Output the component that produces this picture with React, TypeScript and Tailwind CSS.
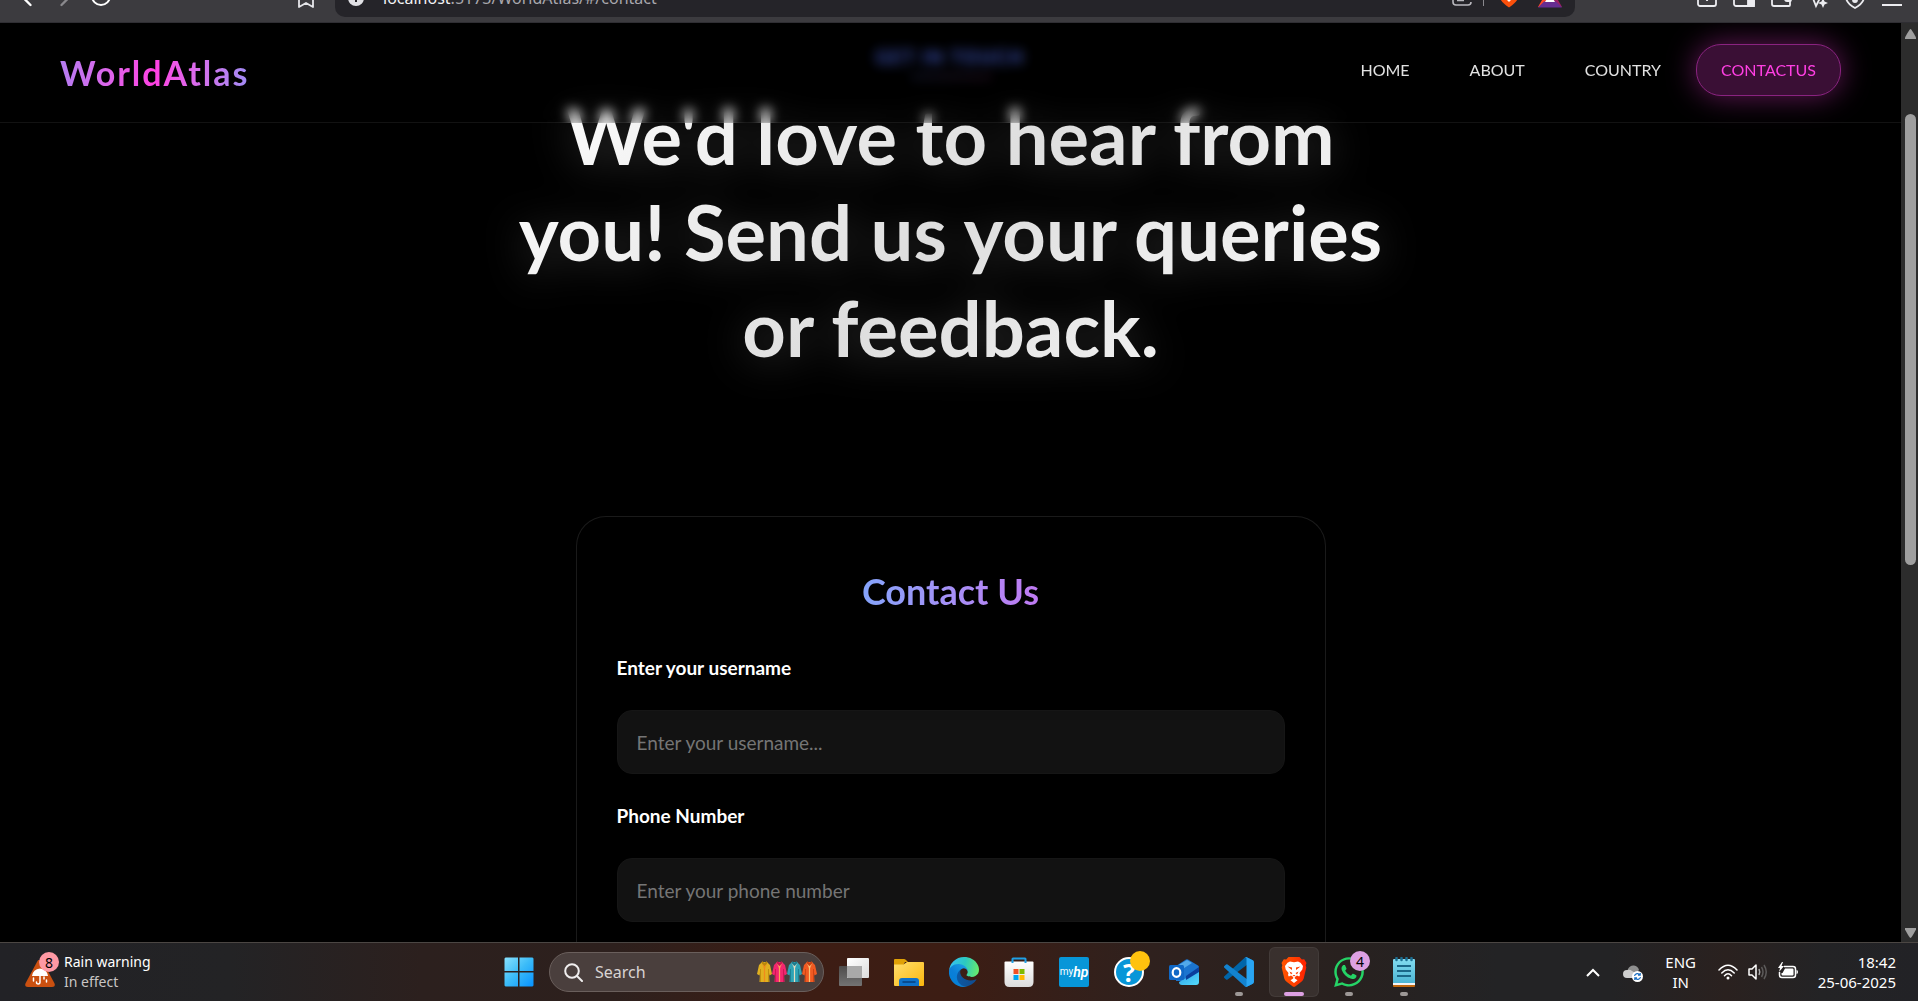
import type { ReactNode } from 'react';
import {
  ChevronLeft, ChevronRight, Bookmark, RotateCw, Download, Wallet,
} from 'lucide-react';
import { FaWhatsapp } from 'react-icons/fa';

/* ---------- Browser toolbar ---------- */

function BrowserBar() {
  return (
    <div className="flex h-[23px] shrink-0 items-end overflow-hidden border-b border-[#2f2e33] bg-[#3c3b3f] font-['Noto_Sans',sans-serif]">
      <div className="flex h-12 w-full shrink-0 items-end">
        <div className="flex w-[335px] shrink-0 items-end justify-between pr-[17px] pb-[10px] pl-[13px]">
          <div className="flex items-end gap-[10px]">
            <button aria-label="Back"><ChevronLeft className="size-7 text-white" /></button>
            <button aria-label="Forward"><ChevronRight className="size-7 text-[#8a898d]" /></button>
            <button aria-label="Reload" className="pb-1"><RotateCw className="size-6 text-white" /></button>
          </div>
          <button aria-label="Bookmark this page" className="pb-[2px]"><Bookmark className="size-6 text-[#e6e6ea]" strokeWidth={1.8} /></button>
        </div>
        <div className="mb-[5px] flex h-10 grow items-end rounded-[10px] bg-[#252429] pr-[13px] pb-[9px] pl-[13px]">
          <svg viewBox="0 0 16 16" className="mr-[19px] mb-[2px] size-4" aria-hidden="true">
            <circle cx="8" cy="8" r="8" fill="#e0e0e4" />
            <path d="M8 4v1.5M8 7v5" stroke="#252429" strokeWidth="2" />
          </svg>
          <span className="text-[16px] leading-5 text-[#a9a8ae]">
            <span className="text-[#f2f2f5]">localhost</span>:5173/WorldAtlas/#/contact
          </span>
          <div className="ml-auto flex items-end gap-[11px]">
            <svg viewBox="0 0 20 20" className="size-5" fill="none" stroke="#b9b8be" strokeWidth="1.6" aria-hidden="true">
              <path d="M1 2v12a3 3 0 0 0 3 3h12a3 3 0 0 0 3-3M5 12.500h7" />
            </svg>
            <span className="mb-[2px] h-5 w-px bg-[#8a898e]" />
            <svg viewBox="0 0 20 24" className="mx-1 h-6 w-5" aria-hidden="true">
              <path d="M1 4h18v10q-1 4-9 9.500q-8-5.500-9-9.500z" fill="#fb500b" />
              <path d="M7 10h6l1 4l-4 4l-4-4z" fill="#fff" />
            </svg>
            <svg viewBox="0 0 24 22" className="ml-1 h-[22px] w-6" aria-hidden="true">
              <path d="M12 0L0 21h12z" fill="#ff4724" />
              <path d="M12 0l12 21H12z" fill="#9e1f63" />
              <path d="M0 21.500l6-6h12l6 6z" fill="#662d91" />
              <path d="M12 8l5 8H7z" fill="#fff" />
            </svg>
          </div>
        </div>
        <div className="flex w-[343px] shrink-0 items-end justify-end gap-[13px] pr-[14px] pb-[13px] text-[#ececf0]">
          <button aria-label="Downloads"><Download className="size-6" strokeWidth={1.8} /></button>
          <button aria-label="Sidebar">
            <svg viewBox="0 0 24 24" className="size-6" fill="none" stroke="currentColor" strokeWidth="1.8">
              <rect x="2" y="5" width="20" height="16" rx="2" /><path d="M16 5h6v16h-6z" fill="currentColor" />
            </svg>
          </button>
          <button aria-label="Wallet"><Wallet className="size-6" strokeWidth={1.8} /></button>
          <button aria-label="Leo AI">
            <svg viewBox="0 0 24 24" className="size-6" fill="none" stroke="currentColor" strokeWidth="1.8">
              <path d="M4 6l6 15l4-8" /><path d="M17 13l1.500 3.500L22 18l-3.500 1.500L17 23l-1.500-3.500L12 18l3.500-1.500z" fill="currentColor" stroke="none" />
            </svg>
          </button>
          <button aria-label="VPN">
            <svg viewBox="0 0 24 24" className="size-6" fill="none" stroke="currentColor" strokeWidth="1.8">
              <path d="M3 6h18v6q0 6-9 11q-9-5-9-11z" /><circle cx="12" cy="15" r="2" fill="currentColor" />
            </svg>
          </button>
          <button aria-label="Menu">
            <svg viewBox="0 0 24 24" className="size-6" stroke="currentColor" strokeWidth="2">
              <path d="M2 12h20M2 20h20" />
            </svg>
          </button>
        </div>
      </div>
    </div>
  );
}

/* ---------- Site ---------- */

const links = ['Home', 'About', 'Country'];

function NavBar() {
  return (
    <header className="absolute inset-x-0 top-0 z-10 flex h-[100px] items-center justify-between border-b border-white/7 bg-black/10 px-[60px] backdrop-blur-[6px]">
      <a href="#/" className="bg-linear-to-r from-[#b47cf2] via-[#ff3fe3] to-[#a08bf5] bg-clip-text text-[34px] font-bold tracking-[2px] text-transparent">
        WorldAtlas
      </a>
      <nav className="mb-1.5 flex gap-[10px] text-[16px] text-[#e2e2e2] uppercase">
        {links.map((l) => (
          <a key={l} href={`#/${l.toLowerCase()}`} className="rounded-[25px] border border-transparent px-6 py-[13px]">{l}</a>
        ))}
        <a href="#/contact" aria-current="page" className="rounded-[25px] border border-[#8a2380] bg-[#3a0f35] px-6 py-[13px] text-[#ff3fe3] shadow-[0_0_30px_rgba(255,63,227,0.4)]">
          ContactUs
        </a>
      </nav>
    </header>
  );
}

function Field({ id, label, placeholder }: { id: string; label: string; placeholder: string }) {
  return (
    <div className="flex flex-col gap-7">
      <label htmlFor={id} className="text-[19px] leading-7 font-bold text-white">{label}</label>
      <input id={id} placeholder={placeholder} className="h-16 rounded-[15px] border border-[#161616] bg-[#121212] px-[19px] text-[19px] text-white placeholder:text-[#757575]" />
    </div>
  );
}

function ScrollBar() {
  return (
    <div className="flex w-[17px] shrink-0 flex-col items-center justify-between bg-[#2c2c2c] py-1 pl-[2px]">
      <svg viewBox="0 0 11 10" className="mt-[2px] h-[10px] w-[11px]" aria-hidden="true"><path d="M5.500 0Q6.500 0 11 8.500V10H0V8.500Q4.500 0 5.500 0" fill="#9f9f9f" /></svg>
      <div className="flex w-[11px] grow flex-col pt-[75px]">
        <div className="h-[451px] rounded-full bg-[#9f9f9f]" />
      </div>
      <svg viewBox="0 0 11 10" className="h-[10px] w-[11px]" aria-hidden="true"><path d="M5.500 10Q6.500 10 11 1.500V0H0V1.500Q4.500 10 5.500 10" fill="#9f9f9f" /></svg>
    </div>
  );
}

function Site() {
  return (
    <div className="flex min-h-0 grow bg-black font-['Lato',sans-serif]">
      <div className="relative flex min-w-0 grow flex-col overflow-hidden">
        <NavBar />
        <main className="flex grow flex-col items-center px-6">
          <section className="flex flex-col items-center text-center">
            <p className="pt-5 text-[18px] leading-7 font-bold tracking-[2px] text-[#4a63d8]">GET IN TOUCH</p>
            <div className="mt-1 h-[3px] w-20 bg-linear-to-r from-[#6080ff] to-[#c04fb0] opacity-30" />
            <h1 className="mt-[10px] max-w-[900px] bg-linear-135 from-white via-[#dedede] to-white bg-clip-text text-[76px] leading-24 font-bold text-transparent drop-shadow-[0_4px_20px_rgba(255,255,255,0.2)]">
              We'd love to hear from you! Send us your queries or feedback.
            </h1>
          </section>
          <form className="mt-[140px] flex w-full max-w-[750px] grow flex-col rounded-t-[30px] border border-b-0 border-[#1a1a1a] px-10 pt-[46px]">
            <h2 className="mb-[35px] self-center bg-linear-to-r from-[#84a4fb] to-[#bf7af2] bg-clip-text text-[36px] leading-14 font-bold text-transparent">
              Contact Us
            </h2>
            <div className="flex flex-col gap-7">
              <Field id="username" label="Enter your username" placeholder="Enter your username..." />
              <Field id="phone" label="Phone Number" placeholder="Enter your phone number" />
            </div>
          </form>
        </main>
      </div>
      <ScrollBar />
    </div>
  );
}

/* ---------- Taskbar icons ---------- */

function Icon({ children, label, size = 'size-[30px]', box = '0 0 30 30' }: { children: ReactNode; label: string; size?: string; box?: string }) {
  return <svg viewBox={box} className={size} role="img" aria-label={label}>{children}</svg>;
}

function WindowsLogo() {
  return (
    <Icon label="Start">
      <defs>
        <linearGradient id="win" x1="0" y1="0" x2="29" y2="29" gradientUnits="userSpaceOnUse">
          <stop stopColor="#8be3ff" /><stop offset=".5" stopColor="#3cbcf8" /><stop offset="1" stopColor="#0893ff" />
        </linearGradient>
      </defs>
      <path d="M1.500 .5H14v13.500H.5V1.500zM15.500 .5H28.500l1 1V14h-14zM.5 15.500H14V29.500H1.500l-1-1zM15.500 15.500h14v13l-1 1h-13z" fill="url(#win)" />
    </Icon>
  );
}

function Robe({ color, trim, dark }: { color: string; trim: string; dark: string }) {
  return (
    <svg viewBox="0 0 15 22" className="h-[22px] w-[15px]" aria-hidden="true">
      <path d="M5 1h5l3 3l2 9l-2.500 1.500L12 12l.5 9h-10L3 12l-.5 2.500L0 13l2-9z" fill={color} />
      <path d="M3.500 8v13M11.500 8v13" stroke={dark} strokeWidth=".8" />
      <path d="M7.500 5v16" stroke={trim} strokeWidth="1.200" />
      <path d="M4.500 1.500l3 7l3-7l-3 1.500z" fill={trim} opacity=".75" />
      <path d="M5 0l2.500 2L10 0v2.500L7.500 5L5 2.500z" fill={dark} />
    </svg>
  );
}

function TaskView() {
  return (
    <Icon label="Task view">
      <defs>
        <linearGradient id="tva" x2="1" y2="1"><stop stopColor="#fff" /><stop offset="1" stopColor="#dcdcdc" /></linearGradient>
        <linearGradient id="tvb" x2="0" y2="1"><stop stopColor="#4e4c4b" /><stop offset="1" stopColor="#737373" /></linearGradient>
      </defs>
      <rect x="0" y="9" width="23" height="20" rx="1" fill="url(#tvb)" />
      <rect x="8" y="1" width="22" height="20" rx="1" fill="url(#tva)" />
      <path d="M8 9h15v12H9l-1-1z" fill="#a9a9a9" />
    </Icon>
  );
}

function Folder() {
  return (
    <Icon label="File Explorer">
      <defs>
        <linearGradient id="fo" x2="1" y2="1"><stop stopColor="#ffdf6e" /><stop offset="1" stopColor="#fbb60d" /></linearGradient>
      </defs>
      <path d="M0 3q0-1 1-1h9q1 0 2 1l2 2h-3l-2 4H0z" fill="#e0a106" />
      <path d="M0 7.500h9.500L13 5h16q1 0 1 1v22q0 1-1 1H1q-1 0-1-1z" fill="url(#fo)" />
      <path d="M5 29v-5q0-3 3-3h14q3 0 3 3v5z" fill="#0f72c9" />
      <path d="M9 25h12" stroke="#063f7d" strokeWidth="1.500" strokeLinecap="round" />
    </Icon>
  );
}

function Edge() {
  return (
    <Icon label="Microsoft Edge" box="0 0 256 256">
      <defs>
        <linearGradient id="e1" x1="60" y1="177" x2="241" y2="177" gradientUnits="userSpaceOnUse"><stop stopColor="#0c59a4" /><stop offset="1" stopColor="#114a8b" /></linearGradient>
        <linearGradient id="e2" x1="152" y1="85" x2="46" y2="201" gradientUnits="userSpaceOnUse"><stop stopColor="#1b9de2" /><stop offset=".67" stopColor="#0b7fd8" /><stop offset="1" stopColor="#0680d7" /></linearGradient>
        <linearGradient id="e3" x1="10" y1="60" x2="250" y2="110" gradientUnits="userSpaceOnUse"><stop stopColor="#35c1f1" /><stop offset=".5" stopColor="#2cc9c0" /><stop offset="1" stopColor="#66eb6e" /></linearGradient>
      </defs>
      <path d="M231 190a94 94 0 0 1-11 5 102 102 0 0 1-36 6c-47 0-89-33-89-75a32 32 0 0 1 17-28c-43 2-54 46-54 72 0 74 68 81 82 81 8 0 20-2 27-5l1 0a128 128 0 0 0 67-53 4 4 0 0 0-4-3z" fill="url(#e1)" />
      <path d="M106 241a79 79 0 0 1-23-21 80 80 0 0 1 29-120c3-2 8-4 15-4a32 32 0 0 1 25 13 32 32 0 0 1 7 19c0 0 25-80-80-80-44 0-80 42-80 78a130 130 0 0 0 12 56 128 128 0 0 0 157 67 75 75 0 0 1-62-8z" fill="url(#e2)" />
      <path d="M152 149c-1 1-3 2-3 5 0 3 2 5 5 7 14 10 41 9 41 9a60 60 0 0 0 30-8 61 61 0 0 0 31-53c0-22-8-37-11-43C223 22 176 0 128 0A128 128 0 0 0 0 126c0-36 37-66 80-66 4 0 24 0 42 10 16 8 25 19 31 29 6 11 7 24 7 29s-3 13-8 21z" fill="url(#e3)" />
    </Icon>
  );
}

function Store() {
  return (
    <Icon label="Microsoft Store">
      <defs><linearGradient id="st" x2="0" y2="1"><stop stopColor="#fff" /><stop offset="1" stopColor="#dcdcdc" /></linearGradient></defs>
      <path d="M.5 5.500q0-1 1-1h27q1 0 1 1V25q0 5-5 5h-19q-5 0-5-5z" fill="url(#st)" />
      <path d="M8.500 6V2q0-.5.5-.5h12q.5 0 .5.5v4" fill="none" stroke="#1fa0e6" strokeWidth="2" />
      <path d="M9.500 12h5v5h-5z" fill="#f25022" /><path d="M15.500 12h5v5h-5z" fill="#7fba00" />
      <path d="M9.500 18h5v5h-5z" fill="#00a4ef" /><path d="M15.500 18h5v5h-5z" fill="#ffb900" />
    </Icon>
  );
}

function MyHp() {
  return (
    <span className="flex size-[30px] items-center justify-center rounded-xs bg-[#0796d8] font-['Roboto',sans-serif] text-[10px] leading-4 text-white">
      my<span className="text-[14px] font-semibold italic">hp</span>
    </span>
  );
}

function Help() {
  return (
    <span className="relative flex size-[30px] items-center justify-center rounded-full border-2 border-white bg-[#0796d8] text-[25px] leading-none font-bold text-white">
      ?
      <span className="absolute -top-2 -right-2 size-5 rounded-full bg-[#ffc20e]" />
    </span>
  );
}

function Outlook() {
  return (
    <Icon label="Outlook">
      <defs>
        <linearGradient id="o1" x2="1" y2="1"><stop stopColor="#2b9fe8" /><stop offset="1" stopColor="#55dcfb" /></linearGradient>
      </defs>
      <path d="M7 9L17 2.500q1-.5 2 0l10 6q1 .5 1 2V24H7z" fill="#1b74cf" />
      <path d="M8 9l10-6l5 3L9 15z" fill="#52a9ea" />
      <path d="M10 25l20-11v11q0 3-3 3H13q-3 0-3-3z" fill="url(#o1)" />
      <path d="M17 19L30 10v5L17 23z" fill="#0a3f9c" />
      <rect x="0" y="8" width="15" height="15" rx="1.500" fill="#1068c6" />
      <ellipse cx="7.500" cy="15.500" rx="3.800" ry="4.400" fill="none" stroke="#fff" strokeWidth="2.200" />
    </Icon>
  );
}

function VsCode() {
  return (
    <Icon label="Visual Studio Code" box="0 0 100 100">
      <path d="M96 11L75.900 1.200a6 6 0 0 0-7 1.200L1.300 63.900a4 4 0 0 0 0 5.900l5.500 5a4 4 0 0 0 5.200.3L93.300 13.300a4 4 0 0 1 6.600 3.200v-.2A6 6 0 0 0 96 11z" fill="#0065a9" />
      <path d="M96 89l-20.100 9.800a6 6 0 0 1-7-1.200L1.300 36.100a4 4 0 0 1 0-5.900l5.500-5a4 4 0 0 1 5.200-.3l81.300 61.800a4 4 0 0 0 6.600-3.200v.2A6 6 0 0 1 96 89z" fill="#1383d0" />
      <path d="M75.900 98.800a6 6 0 0 1-7-1.200c2.200 2.200 6.100.6 6.100-2.600V4.900c0-3.200-3.900-4.800-6.100-2.600a6 6 0 0 1 7-1.200L96 10.900a6 6 0 0 1 3.900 5.600v66.900A6 6 0 0 1 96 89z" fill="#29a5f3" />
    </Icon>
  );
}

function Brave() {
  return (
    <Icon label="Brave" size="h-[30px] w-[26px]" box="0 0 26 30">
      <defs><linearGradient id="br" x2="1" y2="0"><stop stopColor="#ff5601" /><stop offset=".5" stopColor="#ff4000" /><stop offset="1" stopColor="#ff1f01" /></linearGradient></defs>
      <path d="M7.500 0h11l2.300 2.600l2.400-.4L25.500 6l-.8 2.200l.6 2.300l-2.600 11q-.5 2-2.300 3.300L14.500 29.300q-1.500 1-3 0L5.600 24.800q-1.800-1.300-2.300-3.300L.7 10.500l.6-2.300L.5 6l2.300-3.800l2.400.4z" fill="url(#br)" />
      <path d="M9 4.500l4 .8l4-.8l2.500 1.200L22 9l-.7 3.500L18.500 16l.5 2l-.8 1.500l-2.200-1l-2.200 1.500v1.500l2.700 1.700L13 26l-3.500-2.800l2.700-1.700V20L10 18.500l-2.200 1L7 18l.5-2l-2.800-3.500L4 9l2.500-3.300z" fill="#fff" />
      <path d="M6.500 9.500l4.500 1v2.500zM19.500 9.500l-4.500 1v2.500zM8.500 14.500l3 1.500l-1.500 1.500zM17.500 14.500l-3 1.500l1.500 1.500zM11.500 18h3L13 19.500z" fill="#ff4000" />
    </Icon>
  );
}

function Notepad() {
  return (
    <Icon label="Notepad" size="h-[30px] w-[22px]" box="0 0 22 30">
      <defs><linearGradient id="np" x2="0" y2="1"><stop stopColor="#82dbef" /><stop offset="1" stopColor="#4cb5d4" /></linearGradient></defs>
      <path d="M0 26h22v3q0 1-1 1H1q-1 0-1-1z" fill="#c0680f" />
      <path d="M0 25h22v3H0z" fill="#f4f4f4" />
      <path d="M0 3q0-1 1-1h20q1 0 1 1v23H0z" fill="url(#np)" />
      <path d="M3.500 1v2M8.500 1v2M13.500 1v2M18.500 1v2" stroke="#1c6f92" strokeWidth="2.500" strokeLinecap="round" />
      <path d="M4 9h14M4 14h14M4 19h14" stroke="#1a6788" strokeWidth="2" />
    </Icon>
  );
}

function Task({ label, children, state }: { label: string; children: ReactNode; state?: 'open' | 'active' }) {
  return (
    <button
      aria-label={label}
      className={
        state === 'active'
          ? 'relative flex size-[50px] items-center justify-center rounded-md border border-white/5 bg-white/7'
          : 'relative flex size-[50px] items-center justify-center'
      }
    >
      {children}
      {state === 'open' && <span className="absolute bottom-[1px] h-1 w-2 rounded-full bg-[#9d9896]" />}
      {state === 'active' && <span className="absolute bottom-0 h-1 w-5 rounded-full bg-[#dda0e3]" />}
    </button>
  );
}

/* ---------- Taskbar ---------- */

function Weather() {
  return (
    <button className="flex items-center gap-[5px] pl-[25px] text-left">
      <span className="relative">
        <svg viewBox="0 0 30 28" className="mt-1 h-7 w-[30px]" aria-hidden="true">
          <path d="M12.500 2q2.500-4 5 0L29.300 24q1.700 4-2.300 4H3q-4 0-2.300-4z" fill="#ca5010" transform="translate(0 -1)" />
          <path d="M7 16q1-7 8-7.500q7 .5 8 7.500z" fill="#fff" />
          <path d="M15 15v7q0 2-1.800 2T11.500 22M8.500 18v3M19 17v2M21.500 20v2" stroke="#fff" strokeWidth="1.500" fill="none" strokeLinecap="round" />
        </svg>
        <span className="absolute -top-1 -right-1 flex size-5 items-center justify-center rounded-full bg-[#ff99a4] text-[14px] text-black">8</span>
      </span>
      <span className="flex flex-col pl-1 text-[14px] leading-5">
        <span className="text-white">Rain warning</span>
        <span className="text-[#c8c5c4]">In effect</span>
      </span>
    </button>
  );
}

function Tray() {
  return (
    <div className="flex items-center justify-end pr-[22px] text-[15px] leading-5 text-white">
      <button aria-label="Show hidden icons">
        <svg viewBox="0 0 14 9" className="h-[9px] w-[14px]" fill="none" stroke="#fff" strokeWidth="2"><path d="M1 8l6-6l6 6" /></svg>
      </button>
      <svg viewBox="0 0 20 17" className="mt-[2px] ml-[23px] h-[17px] w-5" role="img" aria-label="OneDrive">
        <path d="M5 4q2-4 6-3.500Q15 1 16 5l-6 7H4z" fill="#8e8e8e" />
        <path d="M4 13q-4 0-4-4q0-4 4-4q3-1 5 1l5 3l-4 4z" fill="#cfcfcf" />
        <circle cx="14.500" cy="11.500" r="5.500" fill="#fff" />
        <path d="M11.500 11a3 3 0 0 1 5.500-1M17.500 12a3 3 0 0 1-5.500 1M17.200 8v2.200h-2.200M11.800 15v-2.200h2.200" stroke="#1b6ec2" strokeWidth="1.200" fill="none" />
      </svg>
      <button className="ml-[22px] w-8 text-center">ENG<br />IN</button>
      <div className="ml-[21px] flex items-center gap-[10px]">
        <svg viewBox="0 0 20 16" className="h-4 w-5" fill="none" stroke="#fff" strokeWidth="1.500" strokeLinecap="round" role="img" aria-label="Wi-Fi">
          <path d="M1 6Q10-3.500 19 6M3.800 9Q10 2.500 16.200 9M6.500 11.700Q10 8 13.500 11.700" /><circle cx="10" cy="14" r="1.500" fill="#fff" stroke="none" />
        </svg>
        <svg viewBox="0 0 20 18" className="h-[18px] w-5" fill="none" stroke="#fff" strokeWidth="1.500" role="img" aria-label="Volume">
          <path d="M1 6h3l4-4v14l-4-4H1z" strokeLinejoin="round" />
          <path d="M11 6q1.500 3 0 6" stroke="#aaa" /><path d="M13.500 4q3 5 0 10M16 2q4.500 7 0 14" stroke="#5c5a5a" />
        </svg>
        <svg viewBox="0 0 20 17" className="mb-1 h-[17px] w-5" role="img" aria-label="Battery charging">
          <path d="M6 4.500h9q2.500 0 2.500 2.500v6q0 2.500-2.500 2.500H4q-2.500 0-2.500-2.500v-3" fill="none" stroke="#fff" strokeWidth="1.500" />
          <path d="M7 6.500h7.500q1 0 1 1v5q0 1-1 1h-10q-1 0-1-1V11h1z" fill="#fff" />
          <path d="M18.500 8q1.500 0 1.500 2t-1.500 2z" fill="#fff" /><path d="M4 0L0 6h2L1 10l5-6H3.500L5 0z" fill="#fff" />
        </svg>
      </div>
      <button className="ml-5 text-right">18:42<br />25-06-2025</button>
    </div>
  );
}

function Taskbar() {
  return (
    <footer className="grid h-[59px] shrink-0 grid-cols-[1fr_auto_1fr] items-center border-t border-[#4b4643] bg-[linear-gradient(90deg,#222226_0%,#232325_12%,#2c201e_22%,#2d201d_32%,#3d1d14_42%,#3c1d14_50%,#2f211e_60%,#28211f_70%,#232325_78%,#232325_84%,#2a211f_90%,#232325_95%,#222226_100%)] font-['Noto_Sans',sans-serif]">
      <Weather />
      <div className="flex items-center gap-[5px] pl-[5px]">
        <Task label="Start"><WindowsLogo /></Task>
        <label className="flex h-10 w-[275px] items-center rounded-full border border-[#6a5f5c] bg-[#4a3f3d] pr-[6px] pl-[14px]">
          <svg viewBox="0 0 19 19" className="size-[19px] shrink-0" fill="none" stroke="#f0eeee" strokeWidth="2" strokeLinecap="round" aria-hidden="true">
            <circle cx="8" cy="8" r="6.800" /><path d="M13 13l5 5" />
          </svg>
          <input aria-label="Search" placeholder="Search" className="w-0 min-w-0 grow pl-3 text-[16px] text-white placeholder:text-[#d8d4d3]" />
          <span className="flex">
            <Robe color="#e0b020" trim="#f08a1c" dark="#b8860b" />
            <Robe color="#f2266f" trim="#f9a35a" dark="#c9124f" />
            <Robe color="#2fa3b5" trim="#e8dcc0" dark="#1c7a8c" />
            <Robe color="#f05a22" trim="#f7c37a" dark="#c93f10" />
          </span>
        </label>
        <Task label="Task view"><TaskView /></Task>
        <Task label="File Explorer"><Folder /></Task>
        <Task label="Edge"><Edge /></Task>
        <Task label="Store"><Store /></Task>
        <Task label="myHP"><MyHp /></Task>
        <Task label="Help"><Help /></Task>
        <Task label="Outlook"><Outlook /></Task>
        <Task label="Visual Studio Code" state="open"><VsCode /></Task>
        <Task label="Brave" state="active"><Brave /></Task>
        <Task label="WhatsApp" state="open">
          <FaWhatsapp className="size-[34px] text-[#25d366]" />
          <span className="absolute top-1 right-1 flex size-5 items-center justify-center rounded-full bg-[#dda0e3] text-[14px] text-black">4</span>
        </Task>
        <Task label="Notepad" state="open"><Notepad /></Task>
      </div>
      <Tray />
    </footer>
  );
}

export default function App() {
  return (
    <div className="flex h-screen flex-col overflow-hidden bg-black">
      <BrowserBar />
      <Site />
      <Taskbar />
    </div>
  );
}
